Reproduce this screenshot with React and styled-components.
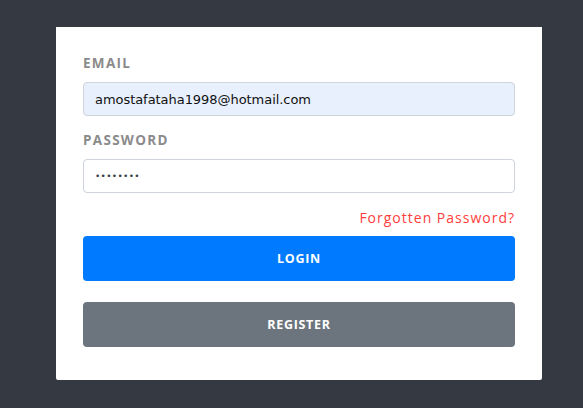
import React from 'react';
import styled, { createGlobalStyle } from 'styled-components';

const GlobalStyle = createGlobalStyle`
  html, body {
    margin: 0;
    padding: 0;
    background: #353a42;
  }
  body {
    font-family: "Open Sans", "Liberation Sans", sans-serif;
  }
`;

const Page = styled.div`
  width: 583px;
  height: 408px;
  padding-top: 27px;
  padding-left: 56px;
  box-sizing: border-box;
`;

const Card = styled.form`
  width: 486px;
  height: 353px;
  box-sizing: border-box;
  background: #fff;
  border-radius: 0 0 2px 2px;
  padding: 27px 27px 0 27px;
  display: flex;
  flex-direction: column;
`;

const Label = styled.label`
  display: block;
  font-size: 13.5px;
  font-weight: 700;
  letter-spacing: 1.3px;
  color: #8b8b8b;
  line-height: 18px;
  margin-top: ${(p) => p.top || '0'};
  margin-bottom: 10px;
`;

const Input = styled.input`
  display: block;
  width: 432px;
  height: 34px;
  box-sizing: border-box;
  border: 1px solid #ced4da;
  border-radius: 4px;
  padding: 0 11px;
  font-family: "DejaVu Sans", sans-serif;
  font-size: ${(p) => (p.type === 'password' ? '9px' : '13px')};
  color: ${(p) => (p.type === 'password' ? '#3a3f47' : '#111')};
  background: ${(p) => (p.filled ? '#e8f0fe' : '#fff')};
  outline: none;
  letter-spacing: ${(p) => (p.type === 'password' ? '0.3px' : '-0.05px')};
`;

const ForgotRow = styled.div`
  display: flex;
  justify-content: flex-end;
  margin-top: 15px;
`;

const ForgotLink = styled.a`
  font-size: 14px;
  color: #ff3d3d;
  letter-spacing: 1px;
  line-height: 20px;
  text-decoration: none;
  cursor: pointer;
`;

const Button = styled.button`
  width: 432px;
  height: 45px;
  border: 0;
  border-radius: 4px;
  background: ${(p) => p.bg};
  color: #fff;
  font-family: "Open Sans", sans-serif;
  font-weight: 700;
  font-size: 12.5px;
  letter-spacing: 0.7px;
  margin-top: ${(p) => p.top};
  cursor: pointer;
`;

export default function App() {
  return (
    <>
      <GlobalStyle />
      <Page>
        <Card onSubmit={(e) => e.preventDefault()}>
          <Label top="0">EMAIL</Label>
          <Input
            filled
            type="text"
            readOnly
            value="amostafataha1998@hotmail.com"
          />
          <Label top="15px">PASSWORD</Label>
          <Input type="password" readOnly value="12345678" />
          <ForgotRow>
            <ForgotLink>Forgotten Password?</ForgotLink>
          </ForgotRow>
          <Button bg="#007bff" top="8px">LOGIN</Button>
          <Button bg="#6c757d" top="21px">REGISTER</Button>
        </Card>
      </Page>
    </>
  );
}
